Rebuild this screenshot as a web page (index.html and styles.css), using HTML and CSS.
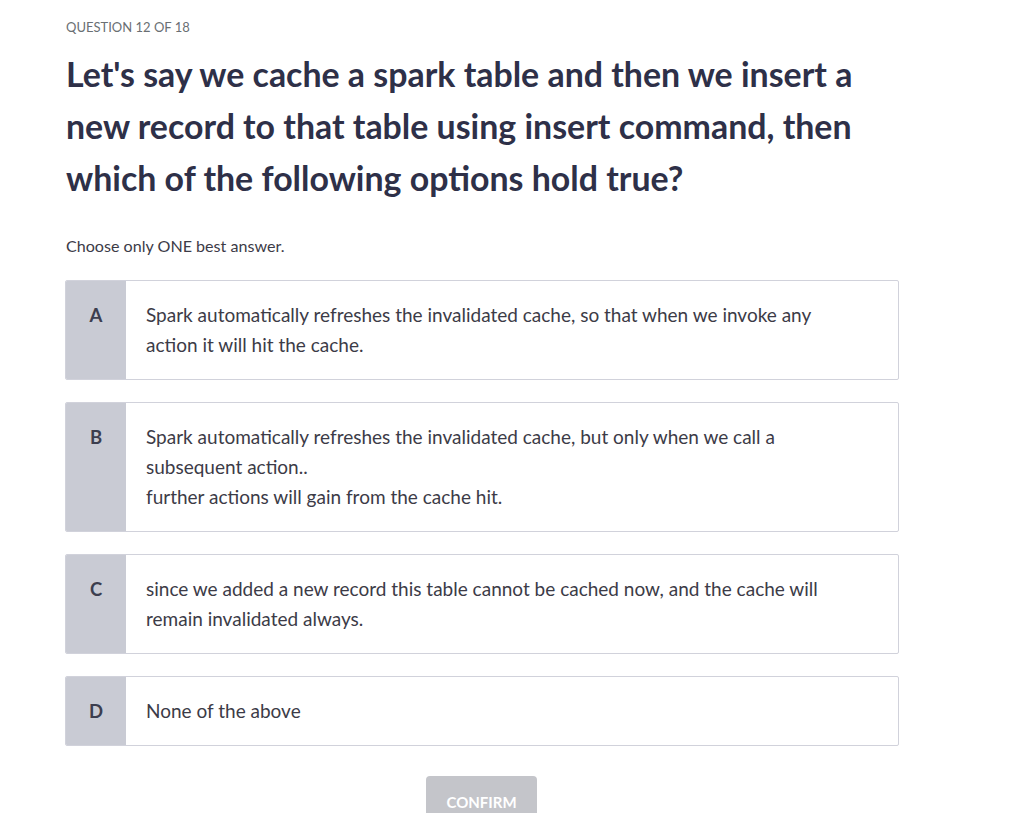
FILE: index.html
```html
<!DOCTYPE html>
<html lang="en">
<head>
<meta charset="utf-8">
<title>Question 12 of 18</title>
<link rel="stylesheet" href="styles.css">
</head>
<body>
<main class="quiz">
  <div class="quiz-count">QUESTION 12 OF 18</div>
  <h1 class="quiz-title">Let's say we cache a spark table and then we insert a new record to that table using insert command, then which of the following options hold true?</h1>
  <p class="quiz-hint">Choose only ONE best answer.</p>
  <ul class="options">
    <li class="option">
      <div class="option-letter">A</div>
      <div class="option-text">Spark automatically refreshes the invalidated cache, so that when we invoke any action it will hit the cache.</div>
    </li>
    <li class="option">
      <div class="option-letter">B</div>
      <div class="option-text">Spark automatically refreshes the invalidated cache, but only when we call a subsequent action..<br>further actions will gain from the cache hit.</div>
    </li>
    <li class="option">
      <div class="option-letter">C</div>
      <div class="option-text">since we added a new record this table cannot be cached now, and the cache will remain invalidated always.</div>
    </li>
    <li class="option">
      <div class="option-letter">D</div>
      <div class="option-text">None of the above</div>
    </li>
  </ul>
  <div class="actions">
    <button class="btn-confirm" disabled>CONFIRM</button>
  </div>
</main>
</body>
</html>
```

FILE: styles.css
```css
* { box-sizing: border-box; }
html, body { margin: 0; padding: 0; background: #ffffff; }
body {
  font-family: Lato, "Liberation Sans", sans-serif;
  color: #3c3b47;
}
.quiz {
  width: 899px;
  padding: 17px 0 0 65px;
}
.quiz-count {
  font-size: 13px;
  line-height: 20px;
  color: #6a6f73;
  padding-left: 1px;
}
.quiz-title {
  margin: 11px 0 0 0;
  font-size: 33.9px;
  line-height: 52px;
  font-weight: 700;
  color: #2e3048;
  padding-left: 1px;
}
.quiz-hint {
  margin: 30px 0 0 0;
  font-size: 16.1px;
  line-height: 24px;
  color: #3c3b47;
  padding-left: 1px;
}
.options {
  list-style: none;
  margin: 22px 0 0 0;
  padding: 0;
  display: flex;
  flex-direction: column;
  gap: 22px;
}
.option {
  display: flex;
  border: 1px solid #d1d2db;
  border-radius: 2px;
  background: #fff;
  overflow: hidden;
}
.option-letter {
  flex: 0 0 60px;
  background: #c9cbd4;
  text-align: center;
  font-weight: 700;
  font-size: 18.5px;
  line-height: 30px;
  padding: 19px 0;
  color: #3c3e4f;
}
.option-text {
  flex: 1;
  padding: 19px 60px 19px 20px;
  font-size: 19px;
  line-height: 30px;
  color: #3c3b47;
}
.actions {
  display: flex;
  justify-content: center;
  margin-top: 30px;
  padding-right: 1px;
}
.btn-confirm {
  width: 111px;
  height: 48px;
  border: none;
  border-radius: 4px;
  background: #c4c5ca;
  color: #ffffff;
  font-family: Lato, "Liberation Sans", sans-serif;
  font-weight: 700;
  font-size: 15px;
  padding: 0;
  padding-top: 4px;
}
```
